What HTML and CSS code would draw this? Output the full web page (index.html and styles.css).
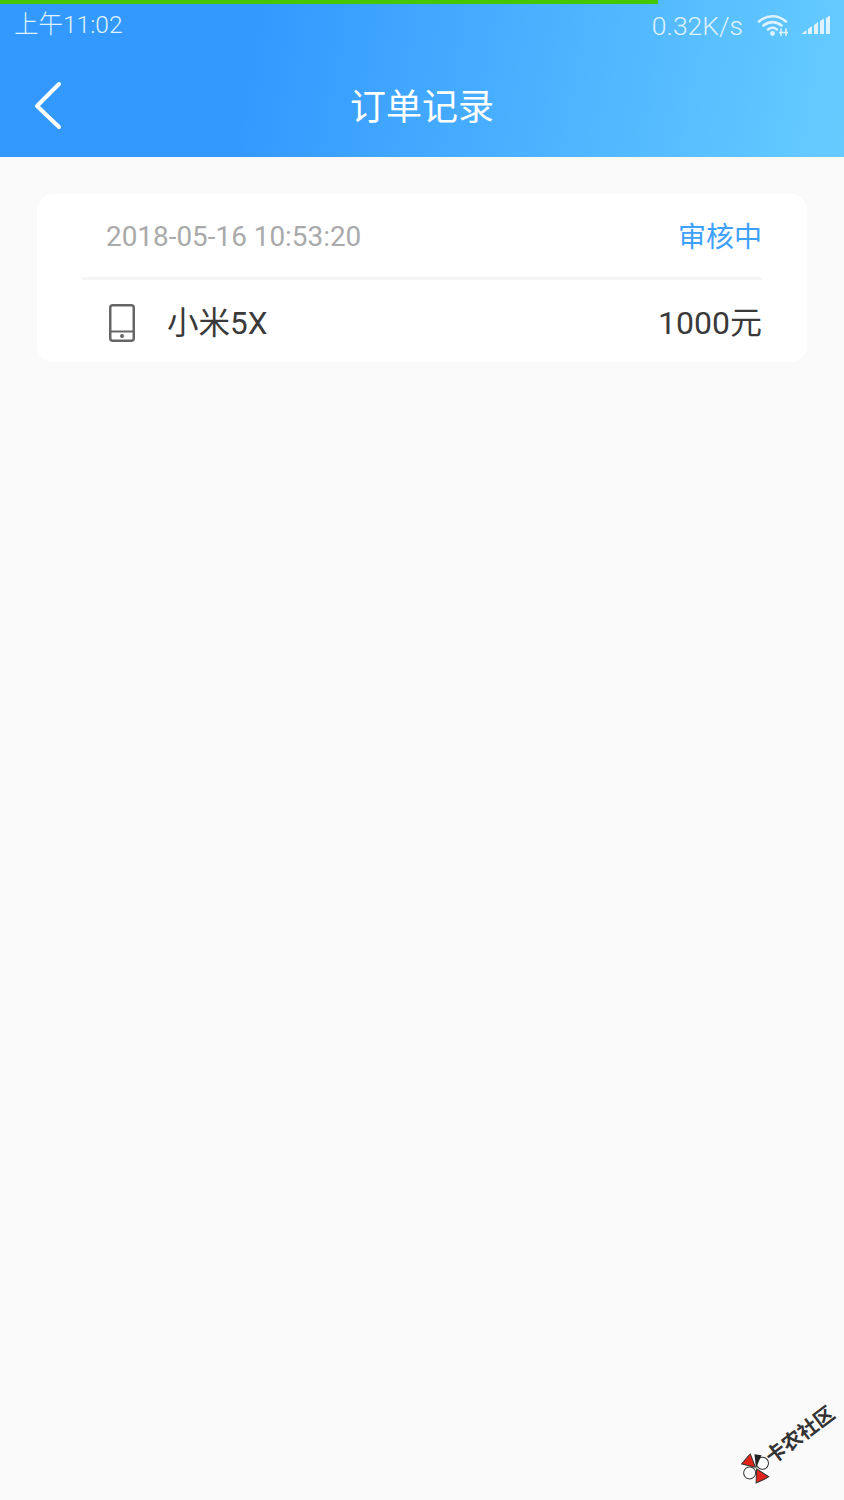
FILE: index.html
```html
<!DOCTYPE html>
<html lang="zh-CN">
<head>
    <meta charset="UTF-8">
    <meta name="viewport" content="width=device-width, initial-scale=1.0">
    <title>订单记录</title>
    <link rel="stylesheet" href="styles.css">
</head>
<body>

    <div class="page">
        <!-- Header -->
        <div class="header">
            <div class="progress"></div>
            <div class="status-bar">
                <span class="status-time">上午11:02</span>
                <div class="status-right">
                    <span class="status-speed">0.32K/s</span>
                    <svg class="icon-wifi" width="32" height="24" viewBox="0 0 32 24">
                        <path d="M2 8.500C10 1.500 21 1.500 29 8.500" fill="none" stroke="#dff2ff" stroke-width="2.600" stroke-linecap="round"/>
                        <path d="M6.500 12.500C12 8 19 8 24.500 12.500" fill="none" stroke="#dff2ff" stroke-width="2.600" stroke-linecap="round"/>
                        <path d="M11 16.500C14 14.200 17 14.200 20 16.500" fill="none" stroke="#dff2ff" stroke-width="2.600" stroke-linecap="round"/>
                        <circle cx="15.500" cy="20.500" r="2.400" fill="#dff2ff"/>
                        <path d="M24 15.500V23M29 15.500V23M22 19.500H31" stroke="#dff2ff" stroke-width="1.500"/>
                    </svg>
                    <svg class="icon-signal" width="30" height="20" viewBox="0 0 30 20">
                        <path d="M0.500 19L5.500 15V19Z" fill="#dff2ff"/>
                        <path d="M7 14L11 11V19H7Z" fill="#dff2ff"/>
                        <path d="M13 10L17 7V19H13Z" fill="#dff2ff"/>
                        <path d="M19 6L23 3.500V19H19Z" fill="#dff2ff"/>
                        <path d="M25 3L29 0.500V19H25Z" fill="#dff2ff"/>
                    </svg>
                </div>
            </div>
            <div class="title-bar">
                <svg class="icon-back" width="28" height="50" viewBox="0 0 28 50">
                    <path d="M25 3L3 25L25 46" fill="none" stroke="#fff" stroke-width="4" stroke-linecap="round" stroke-linejoin="round"/>
                </svg>
                <h1 class="title">订单记录</h1>
            </div>
        </div>

        <!-- Order list -->
        <div class="list">
            <div class="card">
                <div class="card-top">
                    <span class="order-date">2018-05-16 10:53:20</span>
                    <span class="order-status">审核中</span>
                </div>
                <div class="card-bottom">
                    <div class="product">
                        <svg class="icon-phone" width="26" height="38" viewBox="0 0 26 38">
                            <rect x="1.250" y="1.250" width="23.500" height="35.500" rx="2.500" fill="none" stroke="#666" stroke-width="2.500"/>
                            <path d="M1 27.500H25" stroke="#666" stroke-width="2"/>
                            <circle cx="13" cy="32" r="2" fill="#666"/>
                        </svg>
                        <span class="product-name">小米5X</span>
                    </div>
                    <span class="order-price">1000元</span>
                </div>
            </div>
        </div>

        <!-- Forum watermark -->
        <div class="watermark">
            <svg class="watermark-logo" width="30" height="30" viewBox="0 0 30 30">
                <circle cx="7" cy="15" r="6" fill="#fff" stroke="#333" stroke-width="1"/>
                <circle cx="23" cy="15" r="6" fill="#fff" stroke="#333" stroke-width="1"/>
                <path d="M15 14L6 3L19 0Z" fill="#e2231a" stroke="#333" stroke-width="1"/>
                <path d="M15 16L6 27L20 30Z" fill="#e2231a" stroke="#333" stroke-width="1"/>
                <path d="M15 15L22 3L27 8Z" fill="#222"/>
            </svg>
            <span class="watermark-text">卡农社区</span>
        </div>
    </div>

</body>
</html>
```

FILE: styles.css
```css
* {
    box-sizing: border-box;
}
body {
    margin: 0;
    padding: 0;
    background-color: #fafafa;
    font-family: Roboto, "Noto Sans CJK SC", sans-serif;
}
.page {
    position: relative;
    height: 1500px;
    overflow: hidden;
}

/* Header */
.header {
    position: relative;
    height: 157px;
    padding-top: 4px;
    background: linear-gradient(100deg, #3399ff 0%, #3399ff 30%, #66ccff 100%);
}
.progress {
    position: absolute;
    left: 0;
    top: 0;
    width: 658px;
    height: 4px;
    background-color: #44c806;
}
.status-bar {
    display: flex;
    justify-content: space-between;
    align-items: center;
    height: 42px;
    padding: 0 13px 0 14px;
    color: #dff2ff;
    font-size: 26.500px;
    font-weight: 300;
}
.status-time {
    font-size: 24.500px;
    line-height: 24px;
    height: 24px;
}
.status-right {
    display: flex;
    align-items: center;
}
.status-speed {
    margin-right: 14px;
}
.icon-wifi {
    margin-right: 12px;
}
.title-bar {
    position: relative;
    display: flex;
    justify-content: center;
    align-items: center;
    height: 111px;
    padding-top: 12px;
}
.icon-back {
    position: absolute;
    left: 34px;
    top: 35px;
}
.title {
    margin: 0;
    color: #fff;
    font-size: 36px;
    font-weight: 400;
    line-height: 40px;
}

/* Order list */
.list {
    padding: 37px 37px 0;
}
.card {
    height: 168px;
    padding: 0 45px;
    background-color: #fff;
    border-radius: 16px;
}
.card-top {
    display: flex;
    justify-content: space-between;
    align-items: center;
    height: 86px;
    padding: 0 0 0 24px;
    border-bottom: 3px solid #f5f5f5;
}
.order-date {
    color: #aaa;
    font-size: 27.900px;
    line-height: 32px;
    padding-top: 2px;
}
.order-status {
    color: #3ea0ff;
    font-size: 28px;
    line-height: 32px;
    padding-top: 4px;
}
.card-bottom {
    display: flex;
    justify-content: space-between;
    align-items: center;
    height: 82px;
    padding-top: 4px;
    color: #3a3a3a;
    font-size: 32px;
    line-height: 36px;
}
.product {
    display: flex;
    align-items: center;
    padding-left: 27px;
}
.icon-phone {
    margin-right: 32px;
}
.product-name {
    font-size: 31.500px;
    padding-top: 1px;
}

/* Forum watermark */
.watermark {
    position: absolute;
    left: 733px;
    top: 1429px;
    display: flex;
    align-items: center;
    transform: rotate(-37deg);
}
.watermark-logo {
    margin-right: 0;
}
.watermark-text {
    color: #333;
    font-size: 20px;
    font-weight: 700;
    line-height: 24px;
    white-space: nowrap;
}
```
